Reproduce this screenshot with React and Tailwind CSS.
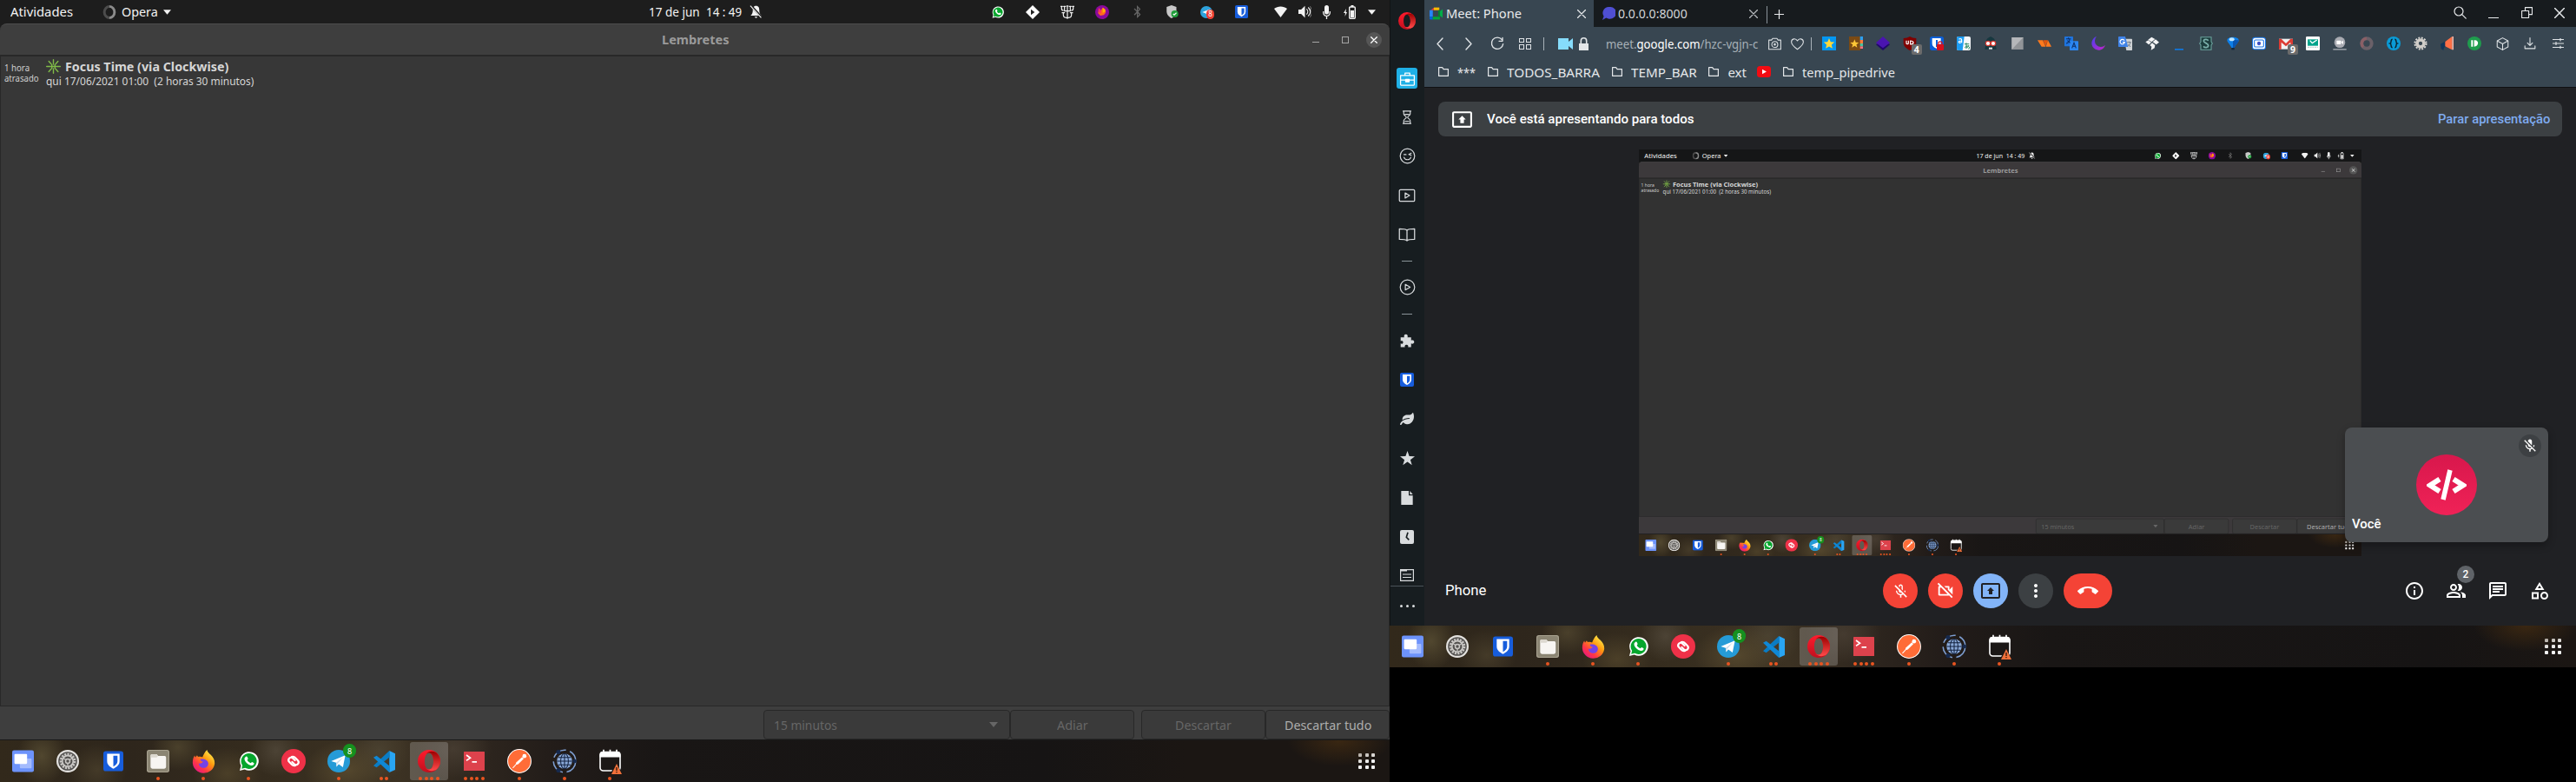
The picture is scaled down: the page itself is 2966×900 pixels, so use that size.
import React, { useLayoutEffect, useRef, useState } from "react";
import { FaLeaf, FaBluetoothB } from "react-icons/fa";
import {
  MdMicOff,
  MdOutlineMicOff,
  MdOutlineVideocamOff,
  MdOutlinePresentToAll,
  MdCallEnd,
  MdMoreVert,
  MdInfoOutline,
  MdOutlinePeopleAlt,
  MdOutlineChat,
  MdOutlineCategory,
} from "react-icons/md";

/* A line of text that condenses or widens to fill its box. */
function Fit({ className = "", children }) {
  const box = useRef(null);
  const inner = useRef(null);
  const [k, setK] = useState(1);
  useLayoutEffect(() => {
    setK(box.current.offsetWidth / inner.current.offsetWidth);
  }, []);
  return (
    <span ref={box} className={`inline-block shrink-0 text-left whitespace-pre ${className}`}>
      <span ref={inner} className="inline-block origin-left" style={{ transform: `scaleX(${k})` }}>
        {children}
      </span>
    </span>
  );
}

function Svg({ className = "", vb = "0 0 24 24", children, ...rest }) {
  return (
    <svg viewBox={vb} className={`block shrink-0 ${className}`} fill="none" {...rest}>
      {children}
    </svg>
  );
}

function Line({ className = "size-4", d, w = 1.5, vb, children }) {
  return (
    <Svg className={className} vb={vb} stroke="currentColor" strokeWidth={w} strokeLinecap="round" strokeLinejoin="round">
      {d && <path d={d} />}
      {children}
    </Svg>
  );
}

/* ---------- shared glyphs ---------- */

const Bitwarden = ({ className }) => (
  <Svg className={className}>
    <rect width="24" height="24" rx="3" fill="#175ddc" />
    <path d="M4.500 3h15v9c0 4.500-3.500 7-7.500 9-4-2-7.500-4.500-7.500-9z" fill="#fff" />
    <path d="M12 5.500v13c3-1.700 5-3.500 5-6.500V5.500z" fill="#175ddc" />
  </Svg>
);

const OperaO = ({ className }) => (
  <Svg className={className}>
    <defs>
      <linearGradient id="opA" x1="0" y1="0" x2="0" y2="1">
        <stop offset="0" stopColor="#ff1b2d" />
        <stop offset="1" stopColor="#c0101e" />
      </linearGradient>
      <linearGradient id="opB" x1="0" y1="0" x2="0" y2="1">
        <stop offset="0" stopColor="#9c0000" />
        <stop offset="1" stopColor="#ff4b4b" />
      </linearGradient>
    </defs>
    <path fillRule="evenodd" fill="url(#opA)" d="M12 0a12 12 0 1 0 0 24 12 12 0 0 0 0-24zm0 3.200c3 0 4.700 4 4.700 8.800s-1.700 8.800-4.700 8.800S7.300 16.800 7.300 12 9 3.200 12 3.200z" />
    <path fill="url(#opB)" d="M8.500 4.800C11 1.500 15 .8 19.500 2.700a12 12 0 0 1 0 18.600c-4.500 1.900-8.500 1.200-11-2.100 1 1.200 2.200 1.600 3.500 1.600 3 0 4.700-4 4.700-8.800S15 3.200 12 3.200c-1.300 0-2.500.4-3.500 1.600z" />
  </Svg>
);

const WhatsApp = ({ className }) => (
  <Svg className={className}>
    <path d="M1 23.500l1.600-6A11.300 11.300 0 1 1 7 21.900z" fill="#fff" />
    <path d="M3.300 21.200l1-4A9.400 9.400 0 1 1 7.600 20.200z" fill="#06a62d" />
    <path d="M8.600 6.500c.6-.4 1.300-.2 1.600.5l.8 1.800c.2.500-.9 1.500-.9 1.900 1 1.800 2.200 2.800 4 3.600.5 0 1.300-1.500 1.800-1.300l2 1c.8.400.4 1.800-.3 2.500-1.300 1.200-3.600 1-6.500-.8-2.700-1.800-4.700-4.800-4.300-7 .2-1 .9-1.700 1.800-2.200z" fill="#fff" />
  </Svg>
);

const Chevron = ({ className = "w-[9px] h-[6px]" }) => (
  <Svg className={className} vb="0 0 10 6">
    <path d="M0 0h10L5 6z" fill="currentColor" />
  </Svg>
);

/* ---------- dock ---------- */

const DockIcons = {
  desktops: (
    <Svg className="w-[25px] h-[26px]">
      <rect width="24" height="24" rx="2" fill="#6d93fb" />
      <rect x="8.500" y="9" width="13" height="11" rx="1" fill="#a4bbfd" />
      <rect x="2.500" y="4" width="14" height="11" rx="1" fill="#fff" />
    </Svg>
  ),
  settings: (
    <Svg className="size-[26px]">
      <circle cx="12" cy="12" r="12" fill="#e4e2df" />
      <circle cx="12" cy="12" r="10" fill="#53514f" />
      <circle cx="12" cy="12" r="7.300" stroke="#c9c7c4" strokeWidth="2.600" strokeDasharray="2 1.060" />
      <circle cx="12" cy="12" r="5.800" stroke="#c9c7c4" strokeWidth="1.600" />
      <path d="M12 12l4.500-3M12 12l-4.500-3M12 12v5" stroke="#c9c7c4" strokeWidth="1.200" />
      <circle cx="12" cy="12" r="2.300" fill="#53514f" stroke="#c9c7c4" strokeWidth="1.400" />
    </Svg>
  ),
  bitwarden: <Bitwarden className="w-[23px] h-[24px]" />,
  files: (
    <Svg className="size-[26px]">
      <rect width="24" height="24" rx="2.500" fill="#a8a290" />
      <rect x="1" y="1" width="22" height="22" rx="2" fill="#8b8573" />
      <path d="M4 6a1.500 1.500 0 0 1 1.500-1.500h5L12 6.500h7A1.500 1.500 0 0 1 20.500 8v10a2 2 0 0 1-2 2H6a2 2 0 0 1-2-2z" fill="#f7f5f2" />
      <path d="M4 6a1.500 1.500 0 0 1 1.500-1.500h5L12 6.500 10.500 8H4z" fill="#dcd8cf" />
    </Svg>
  ),
  firefox: (
    <Svg className="size-[27px]">
      <defs>
        <linearGradient id="ffx" x1="1" y1="0" x2="0.200" y2="1">
          <stop offset="0.100" stopColor="#fff44f" />
          <stop offset="0.450" stopColor="#ff980e" />
          <stop offset="0.750" stopColor="#ff3647" />
          <stop offset="1" stopColor="#e31587" />
        </linearGradient>
      </defs>
      <path d="M15.500 0c.2 2.200 2 3.300 3.800 5.200 3 2.800 4.200 5.800 3.900 9.300A11.300 11.300 0 0 1 .8 13.500C.6 10.500 1.500 7.500 2.800 5.800l.7 2 1.800-2.200.9 1.600c1.600-.6 3-.5 4.600.3 1-2.600 2.500-5.500 4.700-7.500z" fill="url(#ffx)" />
      <path d="M8.500 9.500c3-.8 7.500.2 8.200 4 .3 3-2 5-4.700 5s-5-2-5-4.800c1.500.5 3 .3 4.500-1.700-1.500 0-2.800-.7-3-2.500z" fill="#7542e5" />
    </Svg>
  ),
  whatsapp: <WhatsApp className="w-[23px] h-[24px]" />,
  authy: (
    <Svg className="size-[28px]">
      <circle cx="12" cy="12" r="12" fill="#ef3148" />
      <g stroke="#fff" strokeWidth="1.900" strokeLinecap="round">
        <path d="M10.200 7.800c1.500-.5 2.700 0 3.600 1l2.300 2.300c2.300 2.300-.7 6.300-3.500 3.700l-2-2" />
        <path d="M13.800 16.200c-1.500.5-2.700 0-3.600-1l-2.300-2.300C5.600 10.600 8.600 6.600 11.400 9.200l2 2" />
      </g>
    </Svg>
  ),
  telegram: (
    <Svg className="size-[26px]">
      <circle cx="12" cy="12" r="12" fill="#259bd7" />
      <path d="M4 12L19 5.800 16.500 18.500 12 15.200 9.700 18l-.5-4.500z" fill="#fff" />
      <path d="M9.200 13.500L17 7.500 10.800 14.500 9.700 18z" fill="#c8daea" />
    </Svg>
  ),
  vscode: (
    <Svg className="w-[25px] h-[25px]">
      <path d="M17.500 0L24 3v18l-6.500 3z" fill="#29a5f3" />
      <path d="M17.500 0L18 7 3.500 18.500 0 16.500z" fill="#0a7cc4" />
      <path d="M17.500 24L18 17 3.500 5.500 0 7.500z" fill="#0f88d6" />
    </Svg>
  ),
  opera: <OperaO className="size-[26px]" />,
  terminal: (
    <Svg className="w-[24px] h-[22px]" vb="0 0 24 22">
      <rect width="24" height="22" rx="0.500" fill="#dd424c" />
      <path d="M3 4l4.500 3.200L3 10.400M9.500 11.800H15" stroke="#fff" strokeWidth="1.700" />
    </Svg>
  ),
  postman: (
    <Svg className="size-[28px]">
      <circle cx="12" cy="12" r="11.500" fill="#ff6c37" stroke="#fff" strokeWidth="0.900" />
      <circle cx="17" cy="7" r="2" fill="#fff" />
      <path d="M14.800 8l1.500 1.600-5.500 5.500-2.800.8.900-2.700z" fill="#fff" />
      <path d="M8.500 15.500L5.500 18.700" stroke="#fff" strokeWidth="0.900" />
    </Svg>
  ),
  network: (
    <Svg className="size-[28px]">
      <circle cx="12" cy="12" r="11" stroke="#7e9fd2" strokeWidth="1.300" strokeDasharray="15 4" />
      <circle cx="12" cy="12" r="7.500" fill="#8aa9d8" />
      <path d="M4.500 12h15M12 4.500v15M6 8.300h12M6 15.700h12" stroke="#14233f" strokeWidth="0.900" />
      <ellipse cx="12" cy="12" rx="3.800" ry="7.500" stroke="#14233f" strokeWidth="0.900" />
      <circle cx="6" cy="3" r="2.200" fill="#16294d" />
      <circle cx="22" cy="12" r="2" fill="#16294d" />
      <circle cx="6" cy="21" r="2.200" fill="#16294d" />
    </Svg>
  ),
  calendar: (
    <Svg className="w-[28px] h-[29px]" vb="0 0 28 29">
      <rect x="3" y="3.500" width="23" height="21.500" rx="3.500" fill="#1b1716" stroke="#fff" strokeWidth="1.600" />
      <path d="M2.500 9.500V6A3 3 0 0 1 5.500 3h18a3 3 0 0 1 3 3v3.500z" fill="#fff" />
      <path d="M7 .8v4M14.500 .8v4M22 .8v4" stroke="#fff" strokeWidth="1.700" />
      <path d="M22 15L28 29H14.500z" fill="#1b1716" />
      <path d="M22 17L28 29H16z" fill="#f0703a" />
      <path d="M22 21v4M22 26v1.300" stroke="#3a1a0e" strokeWidth="1.400" />
    </Svg>
  ),
};

const dockItems = [
  ["desktops", 0],
  ["settings", 0],
  ["bitwarden", 0],
  ["files", 1],
  ["firefox", 1],
  ["whatsapp", 1],
  ["authy", 0],
  ["telegram", 1],
  ["vscode", 2],
  ["opera", 4],
  ["terminal", 4],
  ["postman", 1],
  ["network", 1],
  ["calendar", 1],
];

function Dock() {
  return (
    <div className="relative flex h-12 w-full shrink-0 items-stretch overflow-hidden bg-[#191615] bg-[radial-gradient(ellipse_28px_34px_at_48px_18px,#51472f_0%,transparent_100%),radial-gradient(ellipse_34px_30px_at_112px_34px,#443a28_0%,transparent_100%),radial-gradient(ellipse_30px_26px_at_205px_8px,#4a402b_0%,transparent_100%),radial-gradient(ellipse_40px_30px_at_262px_38px,#4b3f28_0%,transparent_100%),radial-gradient(ellipse_30px_30px_at_318px_12px,#4c4335_0%,transparent_100%),radial-gradient(ellipse_50px_34px_at_400px_34px,#54472d_0%,transparent_100%),radial-gradient(ellipse_36px_36px_at_436px_12px,#4a4130_0%,transparent_100%),radial-gradient(ellipse_44px_34px_at_522px_10px,#453b30_0%,transparent_100%),linear-gradient(90deg,#32291b_0px,#2e261c_150px,#352c1e_300px,#3c3223_460px,#2d251e_560px,#221c19_640px,#191615_760px,#161414_1200px,#1b1613_1366px)]">
      <div className="absolute right-0 top-0 h-12 w-32 bg-[radial-gradient(ellipse_60px_30px_at_70px_0px,#3a2712_0%,transparent_100%)]" />
      {dockItems.map(([name, dots]) => (
        <div key={name} className="relative flex w-13 items-center justify-center">
          {name === "opera" && <div className="absolute inset-x-[4px] inset-y-[2px] rounded-[3px] bg-white/20" />}
          <div className="relative">{DockIcons[name]}</div>
          {name === "telegram" && (
            <div className="absolute right-[6px] top-[4px] flex h-[16px] w-[15px] items-center justify-center rounded-full bg-[#15911f] font-[Noto_Sans,sans-serif] text-[9px] leading-none text-white">
              8
            </div>
          )}
          <div className="absolute inset-x-0 bottom-[2px] flex justify-center gap-[2.500px]">
            {Array.from({ length: dots }, (_, i) => (
              <div key={i} className="size-1 rounded-full bg-[#e95420]" />
            ))}
          </div>
        </div>
      ))}
      <div className="mr-[17px] ml-auto grid grid-cols-3 content-center gap-x-[3.500px] gap-y-[3px]">
        {Array.from({ length: 9 }, (_, i) => (
          <div key={i} className="size-[4px] rounded-[1px] bg-[#f2f2f2]" />
        ))}
      </div>
    </div>
  );
}

/* ---------- reminders desktop ---------- */

function Tray() {
  const cell = "flex w-10 items-center justify-center";
  return (
    <div className="flex items-center text-[#f2f2f2]">
      <div className={cell}><WhatsApp className="size-[14px]" /></div>
      <div className={cell}>
        <Svg className="size-[16px]"><path d="M12 0l12 12-12 12L0 12z" fill="#fff" /><path d="M9 7l6.500 5L9 17z" fill="#222" /></Svg>
      </div>
      <div className={cell}>
        <Line className="size-[16px]" w={1.800} d="M12 1v22M7 2v8h10V2M2 2v4c0 2 1 3 3 3M22 2v4c0 2-1 3-3 3M5 13v4c0 6.500 14 6.500 14 0v-4M3 13h4M17 13h4M.5 2h3M20.500 2h3M5.500 2h3M15.500 2h3M10.500 1.500h3" />
      </div>
      <div className={cell}>
        <Svg className="size-[16px]"><circle cx="12" cy="12" r="12" fill="#8b0a9c" /><path d="M6 5l4 4 3-5 4 3 1 6-3 4-6 1-4-4z" fill="#ff6a1f" /><path d="M13 4l4 3 1 4-5 2z" fill="#ffb300" /><path d="M6 5l4 4v5l-4-2z" fill="#ff2c6a" /></Svg>
      </div>
      <div className={cell}><FaBluetoothB className="size-[15px] text-[#666]" /></div>
      <div className={cell}>
        <Svg className="size-[15px]"><path d="M11 0l9 3v8c0 6-4 10-9 13-5-3-9-7-9-13V3z" fill="#c8c8c8" /><circle cx="17" cy="16" r="6.500" fill="#1f9d3a" /><path d="M14 16l2 2 4-4" stroke="#fff" strokeWidth="1.800" /></Svg>
      </div>
      <div className={cell}>
        <div className="relative">
          <Svg className="size-[14px]"><circle cx="12" cy="12" r="12" fill="#2ea2dc" /><path d="M4 12l15-6-3 13-6-5z" fill="#fff" /></Svg>
          <div className="absolute -right-[2px] top-[4px] flex h-[11px] w-[9px] items-center justify-center rounded-full bg-[#ef4035] text-[8px] leading-none text-white">8</div>
        </div>
      </div>
      <div className={cell}><Bitwarden className="size-[15px]" /></div>
      <div className="ml-[18px] flex items-center">
        <Svg className="h-[13px] w-[15px]" vb="0 0 15 13"><path d="M0 3C4-.5 11-.5 15 3L7.500 13z" fill="currentColor" /></Svg>
        <Svg className="ml-[13px] size-[15px]"><path d="M0 8h5l7-7v22l-7-7H0z" fill="currentColor" /><path d="M15 7c3 3 3 7 0 10M18 4c5 5 5 11 0 16" stroke="currentColor" strokeWidth="1.800" /><path d="M21.500 2c4 6 4 14 0 20" stroke="#888" strokeWidth="1.500" /></Svg>
        <Svg className="ml-[13px] h-[16px] w-[9px]" vb="0 0 9 16"><rect x="2" width="5" height="10.500" rx="2.500" fill="currentColor" /><path d="M.7 7v1.500a3.800 3.800 0 0 0 7.600 0V7M4.500 12.500V16" stroke="currentColor" strokeWidth="1.300" /></Svg>
        <Svg className="ml-[15px] h-[16px] w-[14px]" vb="0 0 14 16"><path d="M3 4L0 9h2l-.5 4L4 8H2.500z" fill="currentColor" /><rect x="6.700" y="2" width="6.600" height="13.300" rx="1" stroke="currentColor" strokeWidth="1.400" /><path d="M8.500 0h3v2h-3zM8 6h4v8H8z" fill="currentColor" /></Svg>
        <Chevron className="mr-[16px] ml-[14px] h-[6px] w-[9px]" />
      </div>
    </div>
  );
}

function Desktop({ shared = false }) {
  const chrome = shared ? "bg-[#3c393b]" : "bg-[#3e3e3e]";
  const body = shared ? "bg-[#323232]" : "bg-[#373737]";
  const top = shared ? "bg-[#151617]" : "bg-[#1d1d1d]";
  const btn = "flex h-[34px] items-center rounded-[4px] border border-[#282828] bg-[#3a3a3a]";
  return (
    <div className="flex h-[900px] w-[1600px] flex-col overflow-hidden bg-[#1d1d1d] font-[Noto_Sans,sans-serif]">
      <div className={`grid h-[27px] shrink-0 grid-cols-[1fr_auto_1fr] items-center text-[14px] leading-[20px] text-[#f2f2f2] ${top}`}>
        <div className="flex items-center">
          <Fit className="ml-[12px] w-[72px]">Atividades</Fit>
          <Svg className="ml-[34px] size-[16px]">
            <ellipse cx="12" cy="12" rx="8.800" ry="9.800" stroke="#4c4c4c" strokeWidth="4.500" />
            <path d="M12 2.200c5 0 8.800 4.500 8.800 9.800s-3.800 9.800-8.800 9.800" stroke="#8c8c8c" strokeWidth="4" />
          </Svg>
          <Fit className="ml-[6px] w-[42px]">Opera</Fit>
          <Chevron className="ml-[6px] h-[6px] w-[9px]" />
        </div>
        <div className="ml-[25px] flex items-center">
          <Fit className="w-[59px]">17 de jun</Fit>
          <Fit className="ml-[7px] w-[41px]">14 : 49</Fit>
          <Svg className="ml-[9px] size-[15px]"><path d="M12 1c5 0 6 4 6 8 0 5 1 7 4 10H2c3-3 4-5 4-10 0-4 1-8 6-8zM9 21h6l-3 3z" fill="#f2f2f2" /><path d="M3 1l20 22" stroke="#1d1d1d" strokeWidth="4" /><path d="M1.500 1l20 22" stroke="#f2f2f2" strokeWidth="1.800" /></Svg>
        </div>
        <div className="flex justify-end"><Tray /></div>
      </div>
      <div className={`flex h-[36px] shrink-0 items-center rounded-t-[8px] border-t border-[#4d4d4d] ${chrome}`}>
        <Fit className="ml-[762px] w-[77px] text-[14px] font-bold text-[#9a9a9a]">Lembretes</Fit>
        <div className="mr-[9px] ml-auto flex items-center text-[#a5a5a5]">
          <div className="mt-[5px] h-px w-[8px] bg-[#a5a5a5]" />
          <div className="ml-[26px] h-[8px] w-[8px] border border-[#a5a5a5]" />
          <div className="ml-[20px] flex size-[18px] items-center justify-center rounded-full bg-[#565656] text-white">
            <Line className="size-[8px]" w={1.300} vb="0 0 8 8" d="M.7.700l6.600 6.600M7.300.700L.7 7.300" />
          </div>
        </div>
      </div>
      <div className={`flex min-h-0 flex-1 items-start border border-t-2 border-[#282828] ${body}`}>
        <div className="mt-[7px] flex w-[52px] flex-col pl-[4px] text-[11px] leading-[12px] text-[#cfcfcf]">
          <Fit className="w-[29px]">1 hora</Fit>
          <Fit className="w-[40px]">atrasado</Fit>
        </div>
        <div className="mt-[2px] flex flex-col text-[#d6d6d6]">
          <div className="flex h-[19px] items-center">
            <Line className="size-[17px] text-[#80bb48]" w={2} d="M12 1v7.500M12 15.500V23M1 12h8.500M14.500 12H23M4.500 3.500l4 4.500M15.500 16l4 4.500M4.500 20.500l4-4.500M15.500 8l4-4.500M9.500 9v6M14.500 9v6M9.500 12h5" />
            <Fit className="ml-[5px] w-[188px] text-[14px] leading-[19px] font-bold">Focus Time (via Clockwise)</Fit>
          </div>
          <Fit className="w-[239px] text-[12.500px] leading-[15px]">qui 17/06/2021 01:00  (2 horas 30 minutos)</Fit>
        </div>
      </div>
      <div className={`flex h-[38px] shrink-0 items-end justify-end text-[14px] text-[#666] ${chrome}`}>
        <div className={`${btn} w-[284px] justify-between pr-[13px] pl-[11px]`}>
          <Fit className="w-[73px]">15 minutos</Fit>
          <Chevron className="h-[6px] w-[10px]" />
        </div>
        <div className={`${btn} w-[143px] justify-center`}><Fit className="w-[36px]">Adiar</Fit></div>
        <div className={`${btn} ml-[8px] w-[143px] justify-center`}><Fit className="w-[65px]">Descartar</Fit></div>
        <div className={`${btn} w-[143px] justify-center text-[#adadad]`}><Fit className="w-[100px]">Descartar tudo</Fit></div>
      </div>
      <div className="h-px shrink-0 bg-[#191919]" />
      <Dock />
    </div>
  );
}

/* ---------- browser ---------- */

function Sidebar() {
  const row = "flex w-full shrink-0 items-center justify-center";
  return (
    <div className="flex w-10 shrink-0 flex-col items-center border-l border-[#101314] bg-[#171d20] pr-px text-[#d9dcde]">
      <div className={`${row} h-[46px] pt-[1px]`}><OperaO className="h-[22px] w-[20px]" /></div>
      <div className="mt-[32px] flex h-[24px] w-[24px] shrink-0 items-center justify-center rounded-[3px] bg-[#1fb0e6] text-white">
        <Line className="size-[19px]" w={1.600} d="M2 7.500h20v13a1 1 0 0 1-1 1H3a1 1 0 0 1-1-1zM8.500 7V4h7v3M2 14h7.500M14.500 14H22"><rect x="9.500" y="13" width="5" height="3.500" fill="currentColor" /></Line>
      </div>
      <div className="mt-[10px] flex w-full flex-col items-center">
        <div className={`${row} h-[45px]`}><Line className="size-[18px]" d="M6 2.500h12M6 21.500h12M7 2.500V7c0 2 4 3.500 4 5s-4 3-4 5v4.500M17 2.500V7c0 2-4 3.500-4 5s4 3 4 5v4.500M9 7.500h6M9 18h6" /></div>
        <div className={`${row} h-[45px]`}><Line className="size-[19px]"><circle cx="12" cy="12" r="10.500" /><path d="M7 14c1.500 4.500 8.500 4.500 10 0M7 10h3M17.500 8L14 9.700l3.500 1.300" /></Line></div>
        <div className={`${row} h-[45px]`}><Line className="size-[20px]"><rect x="1.500" y="4" width="21" height="16" rx="1.500" /><path d="M9.500 8.500v7l6-3.500z" /></Line></div>
        <div className={`${row} h-[45px]`}><Line className="size-[20px]" d="M12 6c-1.500-1.500-3-2-10.500-2v14.500c7 0 9 .3 10.500 2 1.500-1.700 3.500-2 10.500-2V4C15 4 13.500 4.500 12 6zM12 6v14" /></div>
        <div className={`${row} h-[16px]`}><div className="h-px w-3 bg-[#8a9499]" /></div>
        <div className={`${row} h-[45px]`}><Line className="size-[19px]"><circle cx="12" cy="12" r="10.500" /><path d="M9 8v8l7-4z" /></Line></div>
        <div className={`${row} h-[16px]`}><div className="h-px w-3 bg-[#8a9499]" /></div>
        <div className={`${row} h-[46px]`}>
          <Svg className="size-[17px]"><path d="M1 6h6c-1-2-.5-5 2.500-5S13 4 12 6h6v5c2-1 5-.5 5 2.500S20 17 18 16v6h-5c1-2 0-4-2.500-4S7 20 8 22H1v-6c2 1 4 .5 4-2s-2-3-4-2z" fill="currentColor" /></Svg>
        </div>
        <div className={`${row} h-[44px]`}><Bitwarden className="size-[16px]" /></div>
        <div className={`${row} h-[45px]`}><FaLeaf className="size-[16px]" /></div>
        <div className={`${row} h-[46px]`}>
          <Svg className="size-[17px]"><path d="M12 0l3 8.500 9 .3-7.200 5.500L19.400 23 12 17.800 4.600 23l2.600-8.700L0 8.800l9-.3z" fill="currentColor" /></Svg>
        </div>
        <div className={`${row} h-[45px]`}><Svg className="size-[16px]"><path d="M2 0h13v8h7v16H2zM17 0l5 6h-5z" fill="currentColor" /></Svg></div>
        <div className={`${row} h-[45px]`}><Svg className="size-[16px]"><rect width="24" height="24" rx="3" fill="currentColor" /><path d="M13.500 4L11 12.500l4.500 4.500" stroke="#171d20" strokeWidth="2.500" /></Svg></div>
        <div className={`${row} h-[34px]`}>
          <Svg className="mt-[9px] h-[14px] w-[16px]" vb="0 0 16 14"><path d="M.6.600h14.800v12.800H.6z" stroke="currentColor" strokeWidth="1.200" /><path d="M0 0h8v2.500H0z" fill="currentColor" /><path d="M3 6h10M3 9.500h10" stroke="currentColor" strokeWidth="1.200" /></Svg>
        </div>
      </div>
      <div className="flex w-full flex-1 items-center justify-center gap-[4px] border-t border-[#4a5358]">
        <div className="size-[3px] rounded-full bg-current" />
        <div className="size-[3px] rounded-full bg-current" />
        <div className="size-[3px] rounded-full bg-current" />
      </div>
    </div>
  );
}

const CloseX = ({ className = "size-[10px]" }) => <Line className={className} w={1.200} vb="0 0 10 10" d="M.5.500l9 9M9.500.500l-9 9" />;

function TabBar() {
  return (
    <div className="flex h-[31px] shrink-0 items-start bg-[#171b1e] text-[14px] text-[#e8eaec]">
      <div className="flex h-[31px] w-[195px] items-center bg-[#384651] pl-[6px]">
        <Svg className="size-[15px]">
          <path d="M2 6l6-5v5z" fill="#e94435" /><path d="M8 1h10v5H8z" fill="#ffbb00" /><path d="M0 6h6v12H0z" fill="#2684fc" />
          <path d="M0 18h6v5H2a2 2 0 0 1-2-2z" fill="#0066da" /><path d="M6 18h13v5H6z" fill="#00a838" /><path d="M16 6h3v12h-3z" fill="#00832d" /><path d="M19 8l5-4v16l-5-4z" fill="#00ac47" />
        </Svg>
        <Fit className="ml-[4px] w-[87px] text-[15px]">Meet: Phone</Fit>
        <div className="mr-[9px] ml-auto"><CloseX /></div>
      </div>
      <div className="flex h-[31px] w-[199px] items-center pl-[10px]">
        <Svg className="size-[15px]"><path d="M12 0a12 11 0 1 1-5 20l-7 4 2.500-7A11 11 0 0 1 12 0z" fill="#4f4fd3" /></Svg>
        <Fit className="ml-[3px] w-[80px] text-[15px] text-[#d3d6d8]">0.0.0.0:8000</Fit>
        <div className="mr-[10px] ml-auto text-[#b8bcbf]"><CloseX /></div>
      </div>
      <div className="mt-[7px] h-[20px] w-px bg-[#8b949a]" />
      <Line className="mt-[11px] ml-[8px] size-[11px]" w={1.200} vb="0 0 11 11" d="M5.500.500v10M.5 5.500h10" />
      <div className="mt-[7px] mr-[13px] ml-auto flex items-center">
        <Line className="size-[15px]" vb="0 0 15 15" w={1.200}><circle cx="6" cy="6" r="5" /><path d="M9.700 9.700l4.500 4.500" /></Line>
        <div className="mt-[11px] ml-[25px] h-px w-[12px] bg-current" />
        <Line className="ml-[26px] size-[13px]" w={1.100} vb="0 0 13 13" d="M.6 4.500h8v8h-8zM4.500 4.300V.600h8v8H8.700" />
        <div className="ml-[25px]"><CloseX className="size-[12px]" /></div>
      </div>
    </div>
  );
}

const Badge = ({ children }) => (
  <div className="absolute top-[20px] left-[17px] flex h-[12px] w-[12px] items-center justify-center rounded-[2px] bg-[#6b6b6b] font-[Noto_Sans,sans-serif] text-[10.500px] leading-none font-bold text-white">
    {children}
  </div>
);

const extensions = [
  <Svg><rect width="24" height="24" fill="#0497f2" /><path d="M12 3l2.700 6.200 6.600.6-5 4.400 1.500 6.500L12 17.300l-5.800 3.400 1.500-6.500-5-4.400 6.600-.6z" fill="#ffd83b" /></Svg>,
  <Svg><rect width="20" height="24" fill="#7b4a14" /><path d="M19 0h5v6h-5z" fill="#2c9ff0" /><path d="M19 6h5v6h-5z" fill="#ff7b3a" /><path d="M19 12h5v5h-5z" fill="#46c6a0" /><path d="M19 17h5v4h-5z" fill="#ff6f7d" /><path d="M9.500 5l2 5 5.500.4-4.300 3.500 1.400 5.100-4.600-3-4.600 3 1.400-5.100L2 10.400l5.500-.4z" fill="#ffc736" /></Svg>,
  <Svg><path d="M0 14l12-7 12 7-12 10z" fill="#20086a" /><path d="M0 11L12 0l12 11-12 9z" fill="#4a14b0" /></Svg>,
  <Svg><path d="M12 0c3 2 7 3 11 3v8c0 6-5 10-11 13C6 21 1 17 1 11V3c4 0 8-1 11-3z" fill="#800000" /><path d="M6 7v4.500c0 2 3.500 2 3.500 0V7M13 7.500v6c4 0 5-1.200 5-3s-1-3-5-3z" stroke="#fff" strokeWidth="1.800" /></Svg>,
  <Svg><rect width="24" height="24" rx="4" fill="#0a5fd8" /><path d="M4 3h15v10c0 4-4 7-7 8-4-2-8-4-8-9z" fill="#fff" /><path d="M12 6v12" stroke="#0a5fd8" strokeWidth="3" /><rect x="12" y="13" width="12" height="11" rx="2" fill="#d8101c" /><path d="M15 13v-2c0-3 6-3 6 0v2" stroke="#d8101c" strokeWidth="2" /></Svg>,
  <Svg><rect width="24" height="24" rx="3" fill="#f5f8fa" /><path d="M0 3a3 3 0 0 1 3-3h10l-3 24H3a3 3 0 0 1-3-3z" fill="#1c9cf2" /><path d="M3.500 4.500c4-1.500 5 0 5 2V11M8.500 7.500c-4 0-5.500 1-5 2.500s3.500 1.500 5-1" stroke="#fff" strokeWidth="1.800" /><path d="M13.500 13h8M16.500 11c0 4 0 7 1 9M21 15c-1 4-6 6-6.500 4s5-4 7-1-1 3-2 3.500" stroke="#148052" strokeWidth="1.300" /></Svg>,
  <Svg><path d="M12 0c5 2 8 5 8 10l2 12H2L4 10c0-5 3-8 8-10z" fill="#17383f" /><circle cx="7.500" cy="12" r="4" fill="#fff" stroke="#d9382f" strokeWidth="1.800" /><circle cx="16.500" cy="12" r="4" fill="#fff" stroke="#d9382f" strokeWidth="1.800" /><path d="M9 19h6v3H9z" fill="#e8e8e8" /></Svg>,
  <Svg><rect x="2" y="1.500" width="20" height="21" fill="#919498" /><path d="M2 22.500V1.500h20z" fill="#b5b7ba" /></Svg>,
  <Svg><path d="M0 6.500h9l5 11H7z" fill="#ff7a1c" /><path d="M9.500 6.500H18l-4 10.500z" fill="#e2560c" /><path d="M18 6.500l6 11H14.500z" fill="#ff7a1c" /></Svg>,
  <Svg><rect x="0" y="0" width="15" height="17" rx="1" fill="#1f74dd" /><rect x="9" y="8" width="15" height="16" rx="1" fill="#2b86f0" /><path d="M3 4h8M7 2v2M9 4c0 4-3 7-6 8M5 7l5 4" stroke="#0d2f66" strokeWidth="1.600" /><path d="M13 20l3.500-9 3.500 9M14.500 17h4" stroke="#0d2f66" strokeWidth="1.600" /></Svg>,
  <Svg><defs><linearGradient id="moon" x1="0" y1="0" x2="1" y2="1"><stop stopColor="#4a3ff0" /><stop offset="1" stopColor="#c424c8" /></linearGradient></defs><path d="M9 0A12 12 0 1 0 24 15 10.500 10.500 0 0 1 9 0z" fill="url(#moon)" /></Svg>,
  <Svg><path d="M10 4h13a1 1 0 0 1 1 1v18a1 1 0 0 1-1 1H14z" fill="#cfd3d6" /><path d="M1 0h11l5 18H1a1 1 0 0 1-1-1V1a1 1 0 0 1 1-1z" fill="#3f83e8" /><path d="M10.500 7A4 4 0 1 0 11 10H7.500" stroke="#fff" strokeWidth="1.700" /><path d="M15 10h7M18.500 8.500V10M21 10c-1 4-3 6-5 7M17 13l4 5" stroke="#66717b" strokeWidth="1.300" /></Svg>,
  <Svg><path d="M11 1l6 3.500-6 5-6-4zM5.500 6.500l5 4L6 14l-5.500-4.500zM18 5l6 5-5 4-6-4.500zM12 11l5 4-1 5-6 3.500 1-6-3-2.500z" fill="#f3f4f5" /></Svg>,
  <Svg><rect x="4.500" y="21" width="15" height="2.500" fill="#1078e0" /></Svg>,
  <Svg><path d="M3 1h18v8l2 3-2 3v8H3v-8l-2-3 2-3z" fill="#1d3d3d" stroke="#6ea5a0" strokeWidth="1.600" /><path d="M16 7c-2-3-8-2.500-8 1s8 3.500 8 7.500-6 4.500-8.500 1.500" stroke="#7ab0aa" strokeWidth="2.600" /></Svg>,
  <Svg><path d="M2 6.500c0-7 20-7 20 0 0 4-5 7-7.500 13h-5C7 13.500 2 10.500 2 6.500z" fill="#0d7fe8" /><path d="M12 6v14h2.500C17 13.500 22 10.500 22 6.500z" fill="#0a55b0" /><path d="M9.500 19.500h5V23h-5z" fill="#11283f" /><ellipse cx="10" cy="5" rx="4.500" ry="3" fill="#bfe6ff" /></Svg>,
  <Svg><rect y="1" width="24" height="22" rx="5" fill="#1673e6" /><rect x="1.500" y="2.500" width="21" height="19" rx="4" fill="#fff" /><rect x="4" y="6" width="16" height="12" rx="2" stroke="#1673e6" strokeWidth="1.600" fill="#fff" /><circle cx="12" cy="12" r="3.200" fill="#3a4fc4" /></Svg>,
  <Svg><rect y="4" width="24" height="18" fill="#f1f1f1" /><path d="M0 4h4l8 8 8-8h4v18h-4V10l-8 7-8-7v12H0z" fill="#dc3b33" /></Svg>,
  <Svg><rect width="24" height="24" rx="2" fill="#fff" /><rect x="3" y="5" width="18" height="11" fill="#00a38b" /><path d="M7 7l4 4.500L19 6" stroke="#fff" strokeWidth="2" /><path d="M3 18.500h18" stroke="#9aa" strokeWidth="1" strokeDasharray="3 1" /></Svg>,
  <Svg><circle cx="12" cy="10" r="9.500" fill="#a9abb2" /><rect x="6.500" y="7" width="7.500" height="6.500" rx="1" fill="#fff" /><path d="M14 10l4-3v6.500z" fill="#fff" /><rect x="0.500" y="21" width="23" height="2.500" fill="#9298a0" /></Svg>,
  <Svg><circle cx="12" cy="12" r="8.500" stroke="#6a6068" strokeWidth="6" /><path d="M12 3.500A8.500 8.500 0 0 0 6 18" stroke="#8a5f66" strokeWidth="5" /></Svg>,
  <Svg><circle cx="12" cy="12" r="12" fill="#0a9bd6" /><path d="M10 5c-4 0-1 6-4 7 3 1 0 7 4 7M14 5c4 0 1 6 4 7-3 1 0 7-4 7" stroke="#0c2430" strokeWidth="2.200" /></Svg>,
  <Svg><circle cx="12" cy="12" r="9.800" stroke="#dad8d4" strokeWidth="3" strokeDasharray="2.900 2.230" /><circle cx="12" cy="12" r="6" stroke="#d0cdc8" strokeWidth="5.500" /></Svg>,
  <Svg><path d="M0 13l10-6v10l-4 2-1 5-4-3z" fill="#10365a" /><path d="M8 9L20 0v23L8 17z" fill="#ff6f45" /><path d="M20 0h2.500v23H20z" fill="#f2b7a8" /></Svg>,
  <Svg><circle cx="12" cy="12" r="12" fill="#1f9c4d" /><path d="M6.500 6.500h3v11h-3zM11.500 6.500c9-1.500 9 11 0 11z" fill="#fff" /></Svg>,
];

const folders = ["***", "TODOS_BARRA", "TEMP_BAR", "ext", "temp_pipedrive"];
const folderWidths = ["w-[21px]", "w-[107px]", "w-[76px]", "w-[22px]", "w-[107px]"];

function Toolbar() {
  return (
    <div className="flex h-[69px] shrink-0 flex-col bg-[#384651] text-[#dfe3e6]">
      <div className="flex h-[38px] items-center pl-[14px]">
        <Line className="h-[15px] w-[8px]" vb="0 0 8 15" w={1.400} d="M7 1L1 7.500 7 14" />
        <Line className="ml-[25px] h-[15px] w-[8px]" vb="0 0 8 15" w={1.400} d="M1 1l6 6.500L1 14" />
        <Line className="ml-[21px] size-[16px]" w={2} d="M20 5.500A10 10 0 1 0 22 13M21 2v6h-6" />
        <div className="ml-[17px] grid grid-cols-2 gap-[2px]">
          {[0, 1, 2, 3].map((i) => <div key={i} className="h-[5.500px] w-[6px] border border-current" />)}
        </div>
        <div className="ml-[14px] h-[15px] w-px bg-[#a8b2b9]" />
        <Svg className="ml-[16px] h-[13px] w-[17px]" vb="0 0 17 13"><path d="M0 0h12v4l5-4v13l-5-4v4H0z" fill="#86dcfb" /></Svg>
        <Svg className="ml-[7px] h-[15px] w-[11px]" vb="0 0 11 15"><path d="M0 7h11v8H0z" fill="#e3e6e8" /><path d="M2.300 7V4a3.200 3.200 0 0 1 6.400 0v3" stroke="#e3e6e8" strokeWidth="1.600" /></Svg>
        <Fit className="ml-[20px] w-[175px] text-[14px] text-[#a6b0b7]">
          meet.<span className="text-white">google.com</span>/hzc-vgjn-c
        </Fit>
        <Line className="ml-[12px] h-[15px] w-[15px]" w={1.700} d="M1 5h5l2-3h8l2 3h5v17H1z"><circle cx="12" cy="13" r="5.500" /><circle cx="12" cy="13" r="1.200" /></Line>
        <Line className="ml-[11px] size-[15px]" w={1.700} d="M12 22C5 17 1 13 1 8.500 1 2 9 1 12 6.500 15 1 23 2 23 8.500 23 13 19 17 12 22z" />
        <div className="ml-[8px] h-[15px] w-px bg-[#a8b2b9]" />
        <div className="ml-[5px] flex h-[38px] items-center">
          {extensions.map((icon, i) => (
            <div key={i} className="relative flex h-[38px] w-[30.950px] items-center justify-center">
              <div className="size-4 *:size-4">{icon}</div>
              {i === 3 && <Badge>4</Badge>}
              {i === 17 && <Badge>9</Badge>}
            </div>
          ))}
        </div>
        <Line className="ml-[10px] size-[15px]" w={1.700} d="M12 1l10 5.500v11L12 23 2 17.500v-11zM2 6.500l10 5.500 10-5.500M12 12v11" />
        <Line className="ml-[17px] size-[14px]" w={1.900} d="M12 1v15M7 11l5 5 5-5M2 17v5h20v-5" />
        <Line className="ml-[19px] h-[12px] w-[13px]" vb="0 0 13 12" w={1.200} d="M.5 1.500h12M.5 6h12M.5 10.500h12M9 0v3M4 4.500v3M9 9v3" />
      </div>
      <div className="flex h-[27px] items-center pl-[16px] text-[15px] leading-[20px] text-[#e4e7e9]">
        {folders.map((name, i) => (
          <div key={name} className="mr-[13.800px] flex items-center">
            {i === 4 && (
              <Svg className="mr-[14px] -ml-[2px] h-[13px] w-[16px]" vb="0 0 16 13"><rect width="16" height="13" rx="3.500" fill="#f30b12" /><path d="M6 3.800v5.400l5-2.700z" fill="#fff" /></Svg>
            )}
            <Line className="mr-[10px] h-[11px] w-[12px]" vb="0 0 12 11" w={1.200} d="M.6.600h4l1.500 2h5.300v7.800H.6z" />
            <Fit className={folderWidths[i]}>{name}</Fit>
          </div>
        ))}
      </div>
    </div>
  );
}

function Meeting() {
  return (
    <div className="relative flex min-h-0 flex-1 flex-col border-t border-[#0f1113] bg-[#202124] font-[Roboto,sans-serif] text-white">
      <div className="mt-[16px] mr-[16px] ml-[16px] flex h-[40px] shrink-0 items-center rounded-[8px] bg-[#3c4043] pr-[14px] pl-[15px]">
        <MdOutlinePresentToAll className="size-[25px]" />
        <Fit className="ml-[16px] w-[239px] text-[14px] font-medium">Você está apresentando para todos</Fit>
        <Fit className="ml-auto w-[129px] text-[14px] font-medium text-[#7fabef]">Parar apresentação</Fit>
      </div>
      <div className="mt-[15px] ml-[247px] h-[468px] w-[832px] shrink-0 overflow-hidden">
        <div className="origin-top-left scale-[0.52]"><Desktop shared /></div>
      </div>
      <div className="flex flex-1 items-center pl-[24px]">
        <Fit className="w-[47px] text-[16px]">Phone</Fit>
        <div className="ml-[457px] flex items-center gap-[12px]">
          <div className="flex size-10 items-center justify-center rounded-full bg-[#f44336]"><MdOutlineMicOff className="size-[19px]" /></div>
          <div className="flex size-10 items-center justify-center rounded-full bg-[#f44336]"><MdOutlineVideocamOff className="size-[22px]" /></div>
          <div className="flex size-10 items-center justify-center rounded-full bg-[#82b4f8] text-[#202124]"><MdOutlinePresentToAll className="size-[24px]" /></div>
          <div className="flex size-10 items-center justify-center rounded-full bg-[#3c4043]"><MdMoreVert className="size-[24px]" /></div>
          <div className="flex h-10 w-14 items-center justify-center rounded-full bg-[#f44336]"><MdCallEnd className="size-[24px]" /></div>
        </div>
        <div className="mr-[30px] ml-auto flex items-center gap-[24px]">
          <MdInfoOutline className="size-[24px]" />
          <div className="relative">
            <MdOutlinePeopleAlt className="size-[24px]" />
            <div className="absolute -top-[17px] left-[13px] flex size-[20px] items-center justify-center rounded-full bg-[#5f6368] text-[12px] leading-none font-medium">2</div>
          </div>
          <MdOutlineChat className="size-[24px]" />
          <MdOutlineCategory className="size-[24px]" />
        </div>
      </div>
      <div className="absolute top-[391px] right-[32px] flex h-[132px] w-[234px] items-center justify-center rounded-[8px] bg-[#4b4e51] shadow-[0_4px_10px_rgba(0,0,0,0.300)]">
        <div className="flex size-[70px] items-center justify-center rounded-full bg-linear-to-b from-[#d8174c] to-[#f02257]">
          <Svg className="h-[36px] w-[46px]" vb="0 0 46 36">
            <path d="M15 11.500L4 18.500l11 7M31 11.500l11 7-11 7" stroke="#fff" strokeWidth="6" />
            <path d="M27 1L19 35" stroke="#fff" strokeWidth="5.500" />
          </Svg>
        </div>
        <div className="absolute top-[8px] right-[8px] flex size-[26px] items-center justify-center rounded-full bg-[#3d4043]"><MdMicOff className="size-[18px]" /></div>
        <Fit className="absolute bottom-[10px] left-[8px] w-[33px] text-[14px] font-medium">Você</Fit>
      </div>
    </div>
  );
}

export default function App() {
  return (
    <div className="flex h-[900px] w-[2966px] overflow-hidden bg-black">
      <Desktop />
      <div className="flex h-[768px] w-[1366px] flex-col">
        <div className="flex h-[720px] shrink-0">
          <Sidebar />
          <div className="flex min-w-0 flex-1 flex-col font-[Noto_Sans,sans-serif]">
            <TabBar />
            <Toolbar />
            <Meeting />
          </div>
        </div>
        <Dock />
      </div>
    </div>
  );
}
